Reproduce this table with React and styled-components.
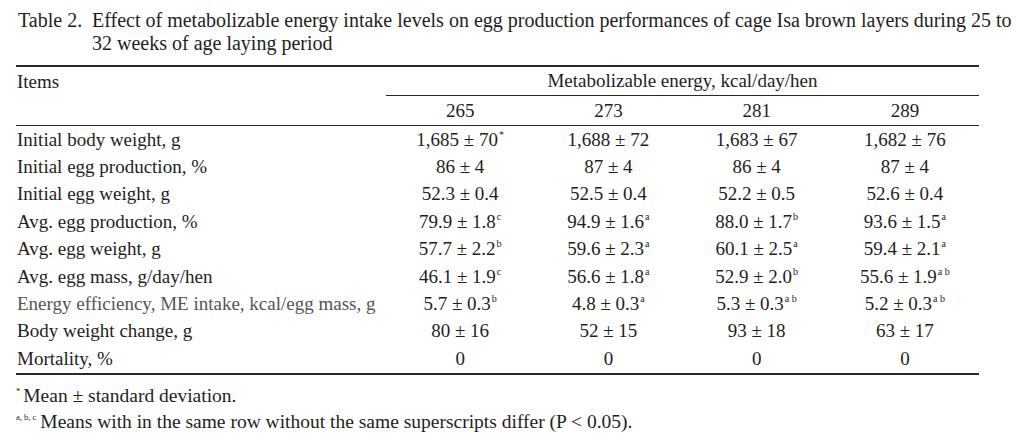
import React from "react";
import styled, { createGlobalStyle } from "styled-components";

const Global = createGlobalStyle`
  html, body { margin: 0; padding: 0; background: #fff; }
  body { font-family: "Liberation Serif", "Times New Roman", serif; color: #1e1e1e; }
`;

const Page = styled.div`
  width: 1024px;
  height: 442px;
  padding: 9px 0 0 16px;
  box-sizing: border-box;
  font-size: 19px;
  overflow: hidden;
`;

const Caption = styled.div`
  display: flex;
  font-size: 20px;
  line-height: 23px;
`;

const CapLabel = styled.div`
  flex: 0 0 76px;
  padding-left: 2px;
  box-sizing: border-box;
`;

const CapText = styled.div`
  width: 922px;
`;

const Table = styled.div`
  margin-top: 10px;
  width: 963px;
  display: grid;
  grid-template-columns: 370px repeat(4, 1fr);
  border-top: 2px solid #2a2a2a;
  border-bottom: 2px solid #2a2a2a;
`;

const HeadCell = styled.div`
  height: ${(p) => p.$h}px;
  display: flex;
  align-items: center;
  justify-content: ${(p) => (p.$left ? "flex-start" : "center")};
  grid-column: ${(p) => p.$span || "auto"};
  border-bottom: ${(p) => (p.$rule ? "1.5px solid #2a2a2a" : "none")};
  box-sizing: border-box;
  padding-left: ${(p) => (p.$left ? "1px" : "0")};
`;

const Cell = styled.div`
  height: 27.4px;
  display: flex;
  align-items: center;
  justify-content: ${(p) => (p.$left ? "flex-start" : "center")};
  padding-left: ${(p) => (p.$left ? "1px" : "0")};
  color: ${(p) => (p.$muted ? "#555" : "#1e1e1e")};
  white-space: nowrap;
`;

const Value = styled.span`
  white-space: nowrap;
`;

const Sup = styled.sup`
  font-size: 10px;
  line-height: 0;
  vertical-align: 8px;
  margin-left: 1px;
  white-space: pre;
`;

const Notes = styled.div`
  margin-top: 8px;
  line-height: 26px;
  font-size: 19.5px;
`;

const NoteLine = styled.div`
  white-space: nowrap;
`;

const NoteMark = styled.sup`
  font-size: 8.5px;
  line-height: 0;
  vertical-align: 8px;
  margin-right: ${(p) => p.$gap}px;
`;

const rows = [
  ["Initial body weight, g", ["1,685 ± 70", "*"], ["1,688 ± 72"], ["1,683 ± 67"], ["1,682 ± 76"]],
  ["Initial egg production, %", ["86 ± 4"], ["87 ± 4"], ["86 ± 4"], ["87 ± 4"]],
  ["Initial egg weight, g", ["52.3 ± 0.4"], ["52.5 ± 0.4"], ["52.2 ± 0.5"], ["52.6 ± 0.4"]],
  ["Avg. egg production, %", ["79.9 ± 1.8", "c"], ["94.9 ± 1.6", "a"], ["88.0 ± 1.7", "b"], ["93.6 ± 1.5", "a"]],
  ["Avg. egg weight, g", ["57.7 ± 2.2", "b"], ["59.6 ± 2.3", "a"], ["60.1 ± 2.5", "a"], ["59.4 ± 2.1", "a"]],
  ["Avg. egg mass, g/day/hen", ["46.1 ± 1.9", "c"], ["56.6 ± 1.8", "a"], ["52.9 ± 2.0", "b"], ["55.6 ± 1.9", "a b"]],
  ["Energy efficiency, ME intake, kcal/egg mass, g", ["5.7 ± 0.3", "b"], ["4.8 ± 0.3", "a"], ["5.3 ± 0.3", "a b"], ["5.2 ± 0.3", "a b"]],
  ["Body weight change, g", ["80 ± 16"], ["52 ± 15"], ["93 ± 18"], ["63 ± 17"]],
  ["Mortality, %", ["0"], ["0"], ["0"], ["0"]],
];

export default function App() {
  return (
    <Page>
      <Global />
      <Caption>
        <CapLabel>Table 2.</CapLabel>
        <CapText>
          Effect of metabolizable energy intake levels on egg production performances of cage Isa brown layers during 25 to 32 weeks of age laying period
        </CapText>
      </Caption>
      <Table>
        <HeadCell $h={29} $left>Items</HeadCell>
        <HeadCell $h={29} $span="2 / 6" $rule>
          Metabolizable energy, kcal/day/hen
        </HeadCell>
        <HeadCell $h={30} $rule />
        {["265", "273", "281", "289"].map((h) => (
          <HeadCell key={h} $h={30} $rule>{h}</HeadCell>
        ))}
        {rows.map((r, i) => (
          <React.Fragment key={i}>
            <Cell $left $muted={r[0].startsWith("Energy")}>{r[0]}</Cell>
            {r.slice(1).map(([v, s], j) => (
              <Cell key={j}>
                <Value>
                  {v}
                  {s && <Sup>{s}</Sup>}
                </Value>
              </Cell>
            ))}
          </React.Fragment>
        ))}
      </Table>
      <Notes>
        <NoteLine>
          <NoteMark $gap={3}>*</NoteMark>Mean ± standard deviation.
        </NoteLine>
        <NoteLine>
          <NoteMark $gap={4}>a, b, c</NoteMark>Means with in the same row without the same superscripts differ (P &lt; 0.05).
        </NoteLine>
      </Notes>
    </Page>
  );
}
